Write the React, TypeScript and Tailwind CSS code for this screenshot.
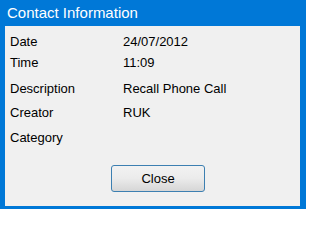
export default function App() {
  const rows = [
    { label: "Date", value: "24/07/2012", h: "h-[21px]" },
    { label: "Time", value: "11:09", h: "h-[26px]" },
    { label: "Description", value: "Recall Phone Call", h: "h-[24px]" },
    { label: "Creator", value: "RUK", h: "h-[25px]" },
    { label: "Category", value: "", h: "h-[24px]" },
  ];
  return (
    <div className="w-[306px] h-[209px] bg-[#0078d7] flex flex-col font-['Liberation_Sans',Arial,sans-serif]">
      {/* Title bar */}
      <div className="h-[26px] flex items-center pl-[7px] text-white text-[15px] leading-none pb-[1px]">
        Contact Information
      </div>
      {/* Body */}
      <div className="ml-[5px] mr-[6px] mb-[3px] flex-1 bg-[#f0f0f0] flex flex-col">
        <div className="flex flex-col pt-[5px]">
          {rows.map((r) => (
            <div key={r.label} className={`flex ${r.h} items-start pt-[3px] text-[13px] leading-[15px] text-black`}>
              <span className="w-[118px] pl-[5px]">{r.label}</span>
              <span>{r.value}</span>
            </div>
          ))}
        </div>
        <div className="flex-1 flex items-end pb-[14px] pl-[106px]">
          <button className="w-[94px] h-[27px] rounded-[3px] border border-[#3c7fb1] bg-gradient-to-b from-[#f2f2f2] via-[#ebebeb] to-[#d6d6d6] text-[13px] text-black">
            Close
          </button>
        </div>
      </div>
    </div>
  );
}
